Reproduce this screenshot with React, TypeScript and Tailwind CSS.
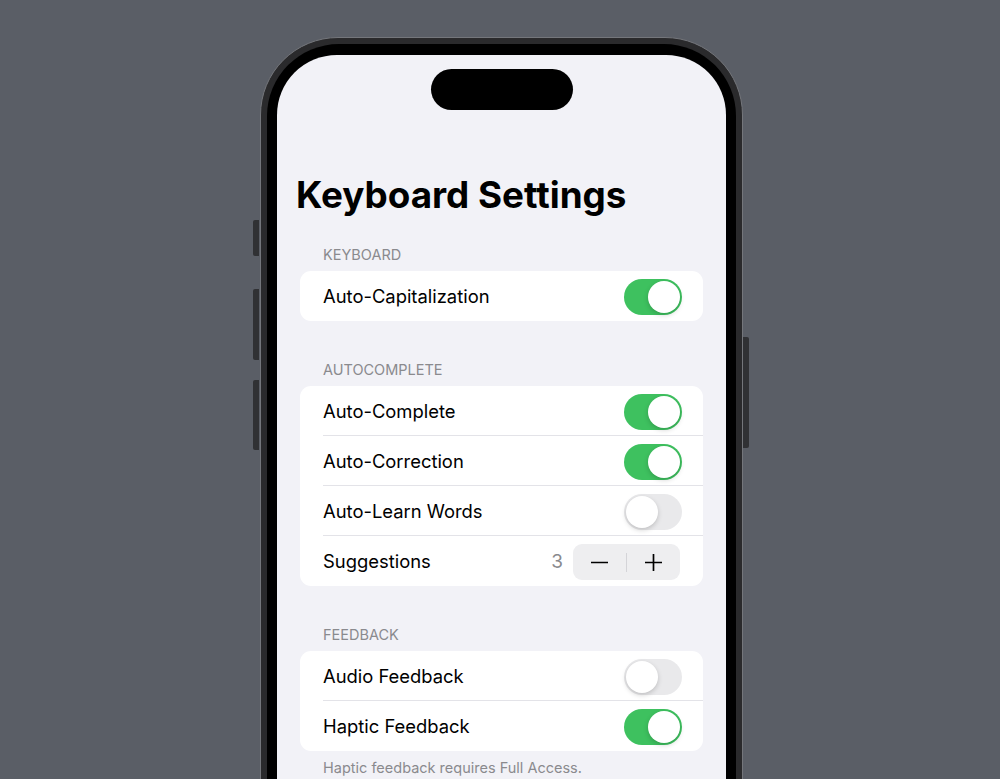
import clsx from "clsx";

const font = { fontFamily: "Inter, 'Liberation Sans', sans-serif" };

function Toggle({ on }: { on: boolean }) {
  return (
    <div
      className={clsx(
        "w-[58px] h-[36px] rounded-full p-[2px] flex",
        on ? "bg-[#3ec15f] justify-end" : "bg-[#e9e9eb] justify-start"
      )}
    >
      <div className="w-[32px] h-[32px] rounded-full bg-white shadow-[0_2px_5px_rgba(0,0,0,0.18)]" />
    </div>
  );
}

function Stepper({ value }: { value: number }) {
  return (
    <div className="flex items-center mr-[2px]">
      <span className="text-[19px] text-[#8a8a8e] mr-[10px]">{value}</span>
      <div className="w-[107px] h-[36px] rounded-[9px] bg-[#eeeef0] flex items-center">
        <div className="flex-1 flex items-center justify-center">
          <svg width="17" height="17" viewBox="0 0 17 17">
            <path d="M0.5 8.5h16" stroke="#000" strokeWidth="1.7" strokeLinecap="round" />
          </svg>
        </div>
        <div className="w-px h-[19px] bg-[#d4d4d8]" />
        <div className="flex-1 flex items-center justify-center">
          <svg width="17" height="17" viewBox="0 0 17 17">
            <path d="M0.5 8.5h16M8.5 0.5v16" stroke="#000" strokeWidth="1.7" strokeLinecap="round" />
          </svg>
        </div>
      </div>
    </div>
  );
}

type Row = { label: string; on?: boolean; stepper?: number };

function Section({ title, rows, className }: { title: string; rows: Row[]; className?: string }) {
  return (
    <div className={className}>
      <div className="pl-[46px] h-[18px] leading-[18px] text-[14.5px] text-[#8a8a8e] mb-[7px]">
        {title}
      </div>
      <div className="mx-[23px] bg-white rounded-[11px] overflow-hidden">
        {rows.map((r, i) => (
          <div key={r.label} className="h-[50px] flex pl-[23px]">
            <div
              className={clsx(
                "flex-1 flex items-center justify-between pr-[21px] pt-[2px]",
                i < rows.length - 1 && "border-b border-[#e3e3e8]"
              )}
            >
              <span className="text-[18.4px] text-black">{r.label}</span>
              {r.stepper !== undefined ? <Stepper value={r.stepper} /> : <Toggle on={!!r.on} />}
            </div>
          </div>
        ))}
      </div>
    </div>
  );
}

export default function App() {
  return (
    <div className="w-[1000px] h-[779px] overflow-hidden bg-[#5a5e66] pt-[37px]" style={font}>
      <div className="relative ml-[260px] w-[483px]">
        {/* side buttons */}
        <div className="absolute left-[-7px] top-[183px] w-[6px] h-[36px] rounded-l-[2px] bg-[#303134]" />
        <div className="absolute left-[-7px] top-[252px] w-[6px] h-[71px] rounded-l-[2px] bg-[#303134]" />
        <div className="absolute left-[-7px] top-[343px] w-[6px] h-[70px] rounded-l-[2px] bg-[#303134]" />
        <div className="absolute right-[-6px] top-[300px] w-[6px] h-[111px] rounded-r-[2px] bg-[#303134]" />

        <div className="rounded-[78px] bg-[#2a2a2c] border border-[#74767b] p-[6px] h-[820px]">
          <div className="rounded-[72px] bg-black px-[10px] pt-[11px] h-full">
            <div className="rounded-[60px] bg-[#f2f2f7] h-full flex flex-col">
              <div className="mt-[14px] mx-auto w-[142px] h-[41px] rounded-full bg-black" />

              <h1 className="mt-[63px] pl-[19px] text-[36.8px] leading-[43px] font-bold text-black">
                Keyboard Settings
              </h1>

              <Section
                className="mt-[30px]"
                title="KEYBOARD"
                rows={[{ label: "Auto-Capitalization", on: true }]}
              />
              <Section
                className="mt-[40px]"
                title="AUTOCOMPLETE"
                rows={[
                  { label: "Auto-Complete", on: true },
                  { label: "Auto-Correction", on: true },
                  { label: "Auto-Learn Words", on: false },
                  { label: "Suggestions", stepper: 3 },
                ]}
              />
              <Section
                className="mt-[40px]"
                title="FEEDBACK"
                rows={[
                  { label: "Audio Feedback", on: false },
                  { label: "Haptic Feedback", on: true },
                ]}
              />
              <p className="mt-[8px] pl-[46px] h-[18px] leading-[18px] text-[14.5px] text-[#8a8a8e]">
                Haptic feedback requires Full Access.
              </p>
            </div>
          </div>
        </div>
      </div>
    </div>
  );
}
